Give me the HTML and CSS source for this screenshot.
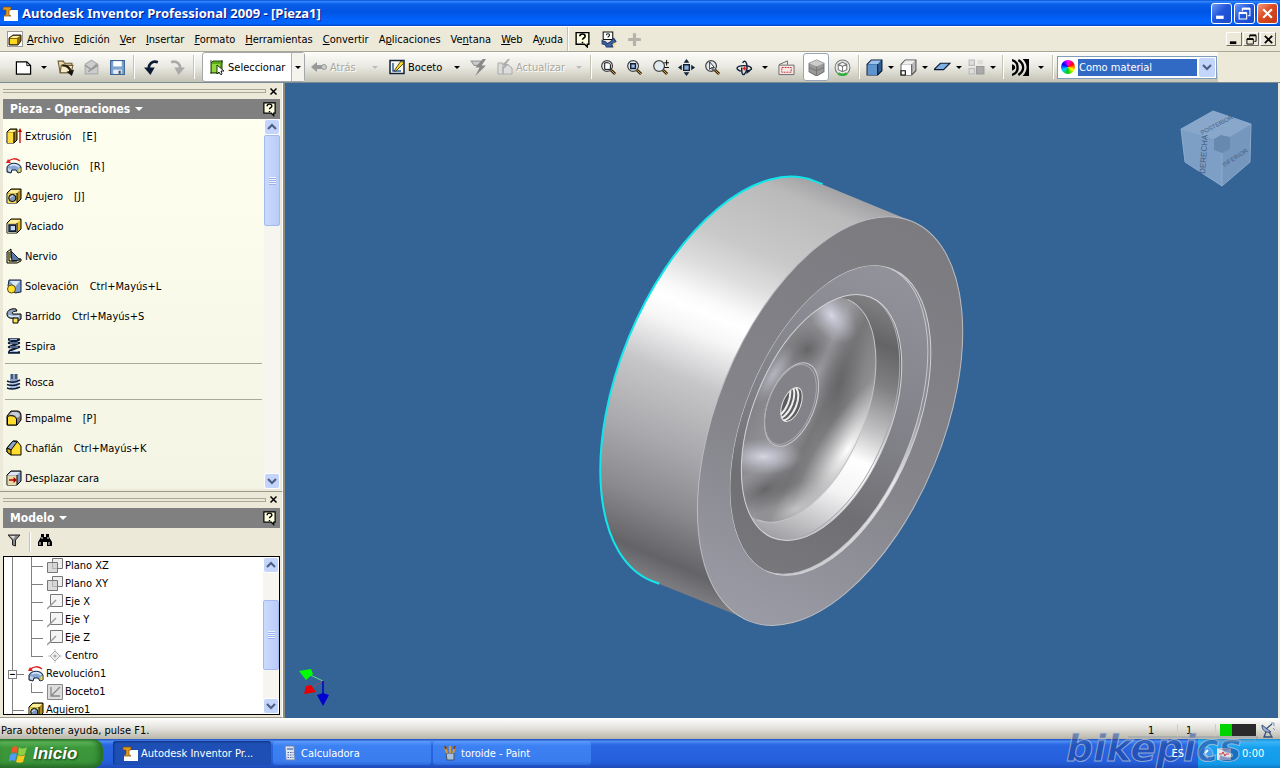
FILE: index.html
```html
<!DOCTYPE html>
<html lang="es">

<head>
    <meta charset="UTF-8">
    <title>Autodesk Inventor Professional 2009 - [Pieza1]</title>
    <link rel="stylesheet" href="styles.css">
</head>

<body>
    <!-- shared icons -->
    <svg class="defs" width="0" height="0">
        <symbol id="app" viewBox="0 0 16 16">
            <path d="M5 5h11v11H2v-6h3z" fill="#fff"/>
            <path d="M1 2h8v3H7v5l2 1H2l2-2V5H1z" fill="#e39a1c" stroke="#7a4a08" stroke-width=".7"/>
        </symbol>
        <symbol id="part" viewBox="0 0 16 16">
            <rect x=".5" y=".5" width="15" height="15" fill="#fff" stroke="#999"/>
            <path d="M2 7l4-3h8v6l-3 4H2z" fill="#8a6500" stroke="#222"/>
            <path d="M3 8h7v5H3z" fill="#ffd91e"/><path d="M3 7l3-2h7l-3 2z" fill="#fff09a"/>
        </symbol>
        <symbol id="help" viewBox="0 0 16 16">
            <path d="M2 1.500h12v11h-1.500v2.500L10 12.500H2z" fill="#ffffe1" stroke="#000" stroke-width="1.300"/>
            <path d="M5.500 5c0-3 5-3 5 0 0 1.600-2.500 1.600-2.500 3.300M8 10v1.500" fill="none" stroke="#000" stroke-width="1.500"/>
        </symbol>
        <symbol id="lens" viewBox="0 0 18 18">
            <path d="M11 11l5 5" stroke="#3b2412" stroke-width="3"/><path d="M12 12l4 4" stroke="#d8a33c" stroke-width="1"/>
            <circle cx="7.500" cy="7.500" r="5.700" fill="#dfe9ee" stroke="#444" stroke-width="1.300"/>
        </symbol>
        <symbol id="extr" viewBox="0 0 16 16">
            <path d="M1 4l3-3h7v11l-3 3H1z" fill="#9a7b12" stroke="#000"/><path d="M1.500 4.500h6V15h-6z" fill="#ffdc3c"/><path d="M2 4l2-2h6L8 4z" fill="#fff3a0"/><path d="M8 4v11" stroke="#000"/>
            <path d="M14 15V3" stroke="#c00000" stroke-width="1.300"/><path d="M14 0l2 4h-4z" fill="#c00000"/>
        </symbol>
        <symbol id="rev" viewBox="0 0 16 16">
            <path d="M1 9c2-5 12-5 14 0v5l-3 1-2-3H6l-1 3-4-1z" fill="#86a7d4" stroke="#10203a"/>
            <path d="M4 8c3-2 6-2 9 1" stroke="#d9e6f8" stroke-width="1.500" fill="none"/><path d="M12.500 11l2-1v4l-2 .5z" fill="#ffd91e"/><path d="M2 10l3 1v3l-3-1z" fill="#c2d3ea"/>
            <path d="M2 4C5 0 10 0 14 3" fill="none" stroke="#d22" stroke-width="1.500"/><path d="M0 5l2-4 3 4z" fill="#d22"/>
        </symbol>
        <symbol id="hole" viewBox="0 0 16 16">
            <path d="M1 5l4-4h10v10l-4 4H1z" fill="#b08e1c" stroke="#000"/><path d="M1.500 5.500H11V15H1.500z" fill="#f5d95a"/><path d="M2 5l3-3h9l-3 3z" fill="#fff0a0"/><path d="M11 5v10" stroke="#000"/>
            <circle cx="6.300" cy="10" r="3.600" fill="#7c95b8" stroke="#000"/><path d="M4 10a3 3 0 013-2" stroke="#e5eefb" fill="none"/>
        </symbol>
        <symbol id="shell" viewBox="0 0 16 16">
            <path d="M1 5l4-4h10v10l-4 4H1z" fill="#e4b920" stroke="#000"/><path d="M1.500 5.500H11V15H1.500z" fill="#e8e2b8"/><path d="M2 5l3-3h9l-3 3z" fill="#ffefa0"/><path d="M11 5v10" stroke="#000"/>
            <path d="M3 7h6.500v6.500H3z" fill="#4a6691" stroke="#0a1426" stroke-width="1.300"/><path d="M5 8h4v4H5z" fill="#c8d6ec"/>
        </symbol>
        <symbol id="rib" viewBox="0 0 16 16">
            <path d="M1 4l4-3v9l10 1v2l-4 2H1z" fill="#e8dfa0" stroke="#000"/><path d="M5 3l9 9-8 1z" fill="#5e7ca8" stroke="#0f1c36"/><path d="M3 4v9h8" fill="none" stroke="#000"/>
        </symbol>
        <symbol id="loft" viewBox="0 0 16 16">
            <path d="M3 2h12v12l-6 1L2 8z" fill="#7c9bc8" stroke="#10203a"/><path d="M4 3h10L9 9z" fill="#dce8f7"/><circle cx="5.500" cy="11" r="4" fill="#ffe02e" stroke="#5c4a00"/>
        </symbol>
        <symbol id="sweep" viewBox="0 0 16 16">
            <path d="M1 6c0-4 5-6 9-5l1 2C7 3 5 5 7 6h8v5l-3 2-4-3C3 11 1 9 1 6z" fill="#8ea4c2" stroke="#000"/><path d="M3 7c1 2 4 2 10 1" stroke="#dfe8f5" fill="none" stroke-width="1.500"/><path d="M7 10h5v5H7z" fill="#ffe25a" stroke="#000"/>
        </symbol>
        <symbol id="coil" viewBox="0 0 16 16">
            <path d="M2 1.500h11L3 5h10L3 9h10L3 13M2 14.500h12" fill="none" stroke="#0e1d3a" stroke-width="2.400" stroke-linejoin="round"/>
            <path d="M4 5h8M4 9h8M4 1.500h7M4 13.500h8" stroke="#9db6dc" fill="none"/>
        </symbol>
        <symbol id="thread" viewBox="0 0 16 16">
            <path d="M4 0h8v15H4z" fill="#8ca3c4"/><path d="M6 0v5M10 0v5" stroke="#22304a" stroke-width="1.300"/>
            <path d="M1 7c4 2 8 2 13-1M1 10.500c5 2 9 1 13-1M1 14c5 2 9 1 13-1" stroke="#0e1d3a" stroke-width="1.500" fill="none"/><path d="M3 9c3 1 6 1 10-1M3 12.500c4 1 6 1 10-1" stroke="#c3d4ee" fill="none"/>
        </symbol>
        <symbol id="fillet" viewBox="0 0 16 16">
            <path d="M1 15V6l4-5h6c3 0 4 2 4 5v4l-4 5z" fill="#86796a" stroke="#000"/><path d="M1.500 15V7C3 5 9 5 10.500 9v6z" fill="#ffdc2e" stroke="#000"/><path d="M3 5l3-3h4c2 0 3 1 4 4l-3 2C10 5 7 4 3 5z" fill="#c3d0e2"/>
        </symbol>
        <symbol id="chamfer" viewBox="0 0 16 16">
            <path d="M1 8l6-7h4l4 5v9H5l-4-3z" fill="#ffdc2e" stroke="#000"/><path d="M1 8l6-7 4 1-6 8z" fill="#8ca4c8" stroke="#000"/><path d="M1 8l4 2v5l-4-3z" fill="#d9ad14" stroke="#000"/>
        </symbol>
        <symbol id="move" viewBox="0 0 16 16">
            <path d="M1 5l4-4h10v10l-4 4H1z" fill="#7e99bd" stroke="#000"/><path d="M1.500 5.500H11V15H1.500z" fill="#e7d9a8"/><path d="M2 5l3-3h9l-3 3z" fill="#dce6f4"/><path d="M11 5v10" stroke="#000"/>
            <path d="M3 10h5" stroke="#b00000" stroke-width="1.500"/><path d="M7.500 7l3.500 3-3.500 3z" fill="#b00000"/>
        </symbol>
        <symbol id="plane" viewBox="0 0 16 16">
            <path d="M5.500.5h10v10h-10z" fill="#efefef" stroke="#777"/><path d="M.5 4.500h10v10H.5z" fill="#ccc" fill-opacity=".7" stroke="#777"/>
        </symbol>
        <symbol id="axis" viewBox="0 0 16 16">
            <path d="M3.500.5h12v12h-12z" fill="#f4f4f4" stroke="#777"/><path d="M0 15L9 6" stroke="#999" stroke-width="1.500"/>
        </symbol>
        <symbol id="center" viewBox="0 0 16 16">
            <path d="M8 1v14M1 8h14" stroke="#ccc"/><path d="M8 3l5 5-5 5-5-5z" fill="#eee" stroke="#aaa"/><circle cx="8" cy="8" r="1.500" fill="#aaa"/>
        </symbol>
        <symbol id="sketch" viewBox="0 0 16 16">
            <path d="M.5.5h15v15H.5z" fill="#ddd" stroke="#888"/><path d="M4 3v9h9M4 12l9-9" stroke="#888" fill="none" stroke-width="1.300"/>
        </symbol>
        <symbol id="chev-up" viewBox="0 0 10 8"><path d="M1 6l4-4 4 4" fill="none" stroke="#4d6185" stroke-width="2.200"/></symbol>
        <symbol id="chev-down" viewBox="0 0 10 8"><path d="M1 2l4 4 4-4" fill="none" stroke="#4d6185" stroke-width="2.200"/></symbol>
        <symbol id="restore" viewBox="0 0 12 12">
            <path d="M4 4V1.500h7V8H9" fill="none" stroke="currentColor"/><path d="M4 1.500h7" stroke="currentColor" stroke-width="2"/>
            <path d="M1 5.500h7V11H1z" fill="none" stroke="currentColor"/><path d="M1 5.500h7" stroke="currentColor" stroke-width="2"/>
        </symbol>
        <symbol id="cross" viewBox="0 0 12 12"><path d="M2 2l8 8M10 2l-8 8" stroke="currentColor" stroke-width="2"/></symbol>
        <symbol id="minim" viewBox="0 0 12 12"><path d="M1 9.500h7" stroke="currentColor" stroke-width="3"/></symbol>
    </svg>

    <header class="titlebar">
        <svg class="icon"><use href="#app"/></svg>
        <h1>Autodesk Inventor Professional 2009 - [Pieza1]</h1>
        <div class="win-buttons">
            <button aria-label="Minimizar"><svg><use href="#minim"/></svg></button>
            <button aria-label="Restaurar"><svg><use href="#restore"/></svg></button>
            <button class="close" aria-label="Cerrar"><svg><use href="#cross"/></svg></button>
        </div>
    </header>

    <nav class="menubar">
        <svg class="icon"><use href="#part"/></svg>
        <div class="menus">
            <button><u>A</u>rchivo</button>
            <button><u>E</u>dición</button>
            <button><u>V</u>er</button>
            <button><u>I</u>nsertar</button>
            <button><u>F</u>ormato</button>
            <button><u>H</u>erramientas</button>
            <button><u>C</u>onvertir</button>
            <button>A<u>p</u>licaciones</button>
            <button>Ve<u>n</u>tana</button>
            <button><u>W</u>eb</button>
            <button>A<u>y</u>uda</button>
        </div>
        <span class="sep"></span>
        <button class="tool" aria-label="Ayuda"><svg><use href="#help"/></svg></button>
        <button class="tool" aria-label="Novedades"><svg viewBox="0 0 16 16"><path d="M3 1h9v7H3z" fill="#fff" stroke="#111"/><path d="M6 4c0-2 3-2 3 0 0 1-1.500 1-1.500 2" fill="none" stroke="#111"/><path d="M2 9l3 1 2 2 3-2 3-3 2 3-4 2 1 3H6l-1-2-3-1z" fill="#3f62a0" stroke="#203a70"/><path d="M13 10l1 2 2 0-2 1 0 2-1-2z" fill="#ffd97a"/></svg></button>
        <button class="tool" aria-label="Añadir" disabled><svg viewBox="0 0 16 16"><path d="M8 2v12M2 8h12" stroke="#b5b3ac" stroke-width="3"/></svg></button>
        <div class="doc-buttons">
            <button aria-label="Minimizar documento"><svg><use href="#minim"/></svg></button>
            <button aria-label="Restaurar documento"><svg><use href="#restore"/></svg></button>
            <button aria-label="Cerrar documento"><svg><use href="#cross"/></svg></button>
        </div>
    </nav>

    <div class="toolbar">
        <div class="tools">
            <button class="tool" aria-label="Nuevo"><svg viewBox="0 0 18 16"><path d="M1.500 2h11l4 4v9h-15z" fill="#fff" stroke="#000" stroke-width="1.300"/><path d="M12.500 2v4h4" fill="none" stroke="#000"/></svg></button>
            <button class="drop" aria-label="Más"></button>
            <button class="tool" aria-label="Abrir"><svg viewBox="0 0 16 16"><path d="M1 2h5l1 2h7v9H3z" fill="#e8d9ae" stroke="#6b5a35"/><path d="M4 6h11l-2 7H3z" fill="#f6ecc8" stroke="#6b5a35"/><path d="M5 6c5 0 7 2 8 6" fill="none" stroke="#2a1d0c" stroke-width="2"/><path d="M16 10l-2 6-5-4z" fill="#111"/></svg></button>
            <button class="tool" aria-label="Enviar" disabled><svg viewBox="0 0 16 16"><path d="M2 5l6-4 6 4v9H2z" fill="#ccc" stroke="#aaa"/><path d="M2 6l6 4 6-4M5 12l8-7" fill="none" stroke="#999" stroke-width="1.500"/></svg></button>
            <button class="tool" aria-label="Guardar"><svg viewBox="0 0 16 16"><path d="M1.500 1.500h13v13h-13z" fill="#7ba3d0" stroke="#3d6392"/><path d="M4 2h8v5H4z" fill="#fff"/><path d="M4 10h8v4H4z" fill="#e8eef6"/><path d="M9 11h2v3H9z" fill="#456"/></svg></button>
            <span class="sep"></span>
            <button class="tool" aria-label="Deshacer"><svg viewBox="0 0 16 16"><path d="M14 3C9 1 4 5 6 11" fill="none" stroke="#0d1a33" stroke-width="2.500"/><path d="M1 8h10l-4 7z" fill="#0d1a33"/></svg></button>
            <button class="tool" aria-label="Rehacer" disabled><svg viewBox="0 0 16 16"><path d="M2 3c5-2 10 2 8 8" fill="none" stroke="#aaa" stroke-width="2.500"/><path d="M15 8H5l4 7z" fill="#aaa"/></svg></button>
            <span class="sep"></span>
            <div class="split">
                <button class="label-tool"><svg viewBox="0 0 16 16"><path d="M2 4l2-2h9v10l-2 2H2z" fill="#5ca81c" stroke="#1f4d05"/><path d="M3 5h8v8H3z" fill="#90d83c"/><path d="M2 1v3M13 1v3M2 13v2" stroke="#333"/><path d="M8 6v9l2-2 2 3 1-1-1-3h3z" fill="#fff" stroke="#000" stroke-width=".8"/></svg>Seleccionar</button>
                <button class="drop" aria-label="Más"></button>
            </div>
            <button class="label-tool back" disabled><svg viewBox="0 0 16 16"><path d="M0 8l6-5v3h5v4H6v3z" fill="#999"/><circle cx="13" cy="8" r="2.500" fill="#ccc" stroke="#999"/></svg>Atrás</button>
            <button class="drop" aria-label="Más" disabled></button>
            <button class="label-tool boceto"><svg viewBox="0 0 16 16"><path d="M1 1.500h14v13H1z" fill="#f8f8e8" stroke="#10203a" stroke-width="1.500"/><path d="M4 4v8h8" fill="none" stroke="#2f5da6" stroke-width="1.500"/><path d="M5 12l7-10 3 2-8 8z" fill="#ffd91e" stroke="#222" stroke-width=".8"/></svg>Boceto</button>
            <button class="drop" aria-label="Más"></button>
            <button class="tool" aria-label="Actualizar todo" disabled><svg viewBox="0 0 16 16"><path d="M1 2h9v4H4z" fill="#ccc" stroke="#999"/><path d="M12 0L5 8h4l-4 8L15 6h-4l4-6z" fill="#888"/></svg></button>
            <button class="label-tool update" disabled><svg viewBox="0 0 16 16"><path d="M1 4h5v11H1zM6 8l4-3 5 4v6H6z" fill="#ddd" stroke="#aaa"/><path d="M11 0L5 6h3l-4 6 8-7H9l4-5z" fill="#aaa"/></svg>Actualizar</button>
            <button class="drop" aria-label="Más" disabled></button>
            <span class="sep"></span>
            <button class="tool" aria-label="Zoom todo"><svg viewBox="0 0 18 18"><use href="#lens"/><path d="M5 4h4l2 2v5H5z" fill="#fff" stroke="#000"/></svg></button>
            <button class="tool" aria-label="Zoom ventana"><svg viewBox="0 0 18 18"><use href="#lens"/><path d="M5 5h5v5H5z" fill="#9cb9e0" stroke="#10203a" stroke-width="1.500"/></svg></button>
            <button class="tool" aria-label="Zoom"><svg viewBox="0 0 18 18"><use href="#lens"/><path d="M13 4h5M15.500 1v6M13 9h5" stroke="#000"/></svg></button>
            <button class="tool" aria-label="Encuadre"><svg viewBox="0 0 18 18"><path d="M9 0l3 4H6zM9 18l3-4H6zM0 9l4-3v6zM18 9l-4-3v6z" fill="#10203a"/><path d="M6 6h6v6H6z" fill="#8fb0dc" stroke="#10203a" stroke-width="1.500"/></svg></button>
            <button class="tool" aria-label="Zoom seleccionado"><svg viewBox="0 0 18 18"><use href="#lens"/><path d="M6 3v8l2-2 1 3 1-1-1-2h2z" fill="#fff" stroke="#000" stroke-width=".8"/></svg></button>
            <button class="tool orbit" aria-label="Órbita"><svg viewBox="0 0 18 18"><path d="M5 13c-6-2-5-6 3-6s12 4 4 6" fill="none" stroke="#10203a" stroke-width="1.500"/><path d="M7 4c4-6 7 6 2 12-3 2-3-3-3-7" fill="none" stroke="#10203a" stroke-width="1.500"/><path d="M9 8v4M7 10h4" stroke="#d22" stroke-width="1.500"/><path d="M11 11l4 2-4 3z" fill="#10203a"/></svg></button>
            <button class="drop" aria-label="Más"></button>
            <button class="tool" aria-label="Mirar a"><svg viewBox="0 0 18 16"><path d="M1 5l9-4v4" fill="none" stroke="#666"/><path d="M1 5.500h16v10H1z" fill="#f6e8e8" stroke="#666"/><path d="M4 8h10v5H4z" fill="none" stroke="#c22" stroke-dasharray="2 1"/></svg></button>
            <button class="tool active" aria-label="Sombreado"><svg viewBox="0 0 16 16"><path d="M8 1l7 3v8l-7 4-7-4V4z" fill="#999" stroke="#777"/><path d="M8 1l7 3-7 3-7-3z" fill="#ccc"/><path d="M1 8l7 3 7-3M8 7v8" fill="none" stroke="#777"/></svg></button>
            <button class="tool" aria-label="Proyección"><svg viewBox="0 0 16 16"><circle cx="8" cy="8" r="7" fill="#e8eeea" stroke="#777"/><path d="M4 13.500a7 7 0 008 0" fill="none" stroke="#2fae3c" stroke-width="2.500"/><path d="M8 3l4 2v5l-4 2-4-2V5zM4 5l4 2 4-2M8 7v5" fill="#fff" stroke="#777"/></svg></button>
            <span class="sep"></span>
            <button class="tool small" aria-label="Color"><svg viewBox="0 0 16 16"><path d="M1 5l4-4h10v10l-4 4H1z" fill="#2e5c94" stroke="#0b1a30"/><path d="M1.500 5.500H11V15H1.500z" fill="#5f94cf"/><path d="M2 5l3-3.500h9L11 5z" fill="#9cc2ec"/><path d="M11 5v10" stroke="#0b1a30"/></svg></button>
            <button class="drop small" aria-label="Más"></button>
            <button class="tool small" aria-label="Sombra"><svg viewBox="0 0 16 16"><path d="M1 5l4-4h10v10l-4 4H1z" fill="#bbb" stroke="#555"/><path d="M1.500 5.500H11V15H1.500z" fill="#fff"/><path d="M2 5l3-3.500h9L11 5z" fill="#eee"/><path d="M11 5v10" stroke="#555"/><path d="M1 11h4v4H1z" fill="#fff" stroke="#000"/></svg></button>
            <button class="drop small" aria-label="Más"></button>
            <button class="tool small" aria-label="Plano"><svg viewBox="0 0 16 16"><path d="M0 10l6-6h9l-6 6z" fill="#7fb0e4" stroke="#0b1a30"/></svg></button>
            <button class="drop small" aria-label="Más"></button>
            <button class="tool small" aria-label="Sistema" disabled><svg viewBox="0 0 16 16"><path d="M1 1h5v5H1zM1 9h5v5H1z" fill="#ddd" stroke="#bbb"/><path d="M8 7h7v7H8z" fill="#aaa" stroke="#999"/><path d="M9 1h5v4H9z" fill="#ddd"/></svg></button>
            <button class="drop small" aria-label="Más"></button>
            <span class="sep"></span>
            <button class="tool" aria-label="Ondas"><svg viewBox="0 0 16 16"><path d="M0 1c7 2 7 12 0 14M6 1c6 4 6 10 0 14" fill="none" stroke="#000" stroke-width="2.200"/><path d="M10 0h6v16h-6c5-5 5-11 0-16z"/><path d="M0 5c4 1 4 5 0 6z"/></svg></button>
            <button class="drop" aria-label="Más"></button>
            <span class="sep"></span>
            <div class="combo">
                <span class="wheel"></span>
                <select aria-label="Estilo de color">
                    <option selected>Como material</option>
                </select>
                <span class="combo-arrow"><svg><use href="#chev-down"/></svg></span>
            </div>
        </div>
    </div>

    <main>
        <aside>
            <section class="panel operations">
                <div class="grip"><i></i><button aria-label="Cerrar panel"><svg><use href="#cross"/></svg></button></div>
                <div class="panel-title">
                    <button>Pieza - Operaciones</button>
                    <svg><use href="#help"/></svg>
                </div>
                <div class="scroll-area">
                    <ul class="ops">
                        <li><svg><use href="#extr"/></svg>Extrusión<kbd>[E]</kbd></li>
                        <li><svg><use href="#rev"/></svg>Revolución<kbd>[R]</kbd></li>
                        <li><svg><use href="#hole"/></svg>Agujero<kbd>[J]</kbd></li>
                        <li><svg><use href="#shell"/></svg>Vaciado</li>
                        <li><svg><use href="#rib"/></svg>Nervio</li>
                        <li><svg><use href="#loft"/></svg>Solevación<kbd>Ctrl+Mayús+L</kbd></li>
                        <li><svg><use href="#sweep"/></svg>Barrido<kbd>Ctrl+Mayús+S</kbd></li>
                        <li><svg><use href="#coil"/></svg>Espira</li>
                        <li class="line"></li>
                        <li><svg><use href="#thread"/></svg>Rosca</li>
                        <li class="line"></li>
                        <li><svg><use href="#fillet"/></svg>Empalme<kbd>[P]</kbd></li>
                        <li><svg><use href="#chamfer"/></svg>Chaflán<kbd>Ctrl+Mayús+K</kbd></li>
                        <li><svg><use href="#move"/></svg>Desplazar cara</li>
                    </ul>
                    <div class="scrollbar">
                        <button aria-label="Subir"><svg><use href="#chev-up"/></svg></button>
                        <div class="track"><div class="thumb"></div></div>
                        <button aria-label="Bajar"><svg><use href="#chev-down"/></svg></button>
                    </div>
                </div>
            </section>

            <section class="panel model">
                <div class="grip"><i></i><button aria-label="Cerrar panel"><svg><use href="#cross"/></svg></button></div>
                <div class="panel-title">
                    <button>Modelo</button>
                    <svg><use href="#help"/></svg>
                </div>
                <div class="model-tools">
                    <button class="tool small" aria-label="Filtro"><svg viewBox="0 0 16 16"><path d="M2 3h12L9.500 8v6l-3-1V8z" fill="#888" stroke="#222"/><path d="M4 4h5L7.500 7z" fill="#ddd"/></svg></button>
                    <span class="sep"></span>
                    <button class="tool small" aria-label="Buscar"><svg viewBox="0 0 16 16"><path d="M4 2h3v3h2V2h3v3l3 5v4h-5v-4H6v4H1v-4l3-5z" fill="#000"/><path d="M3 10v3M12 10v3M5 5v2M11 5v2" stroke="#fff"/></svg></button>
                </div>
                <div class="scroll-area tree-box">
                    <ul class="tree">
                        <li><i class="v"></i><i class="tee"></i><svg><use href="#plane"/></svg>Plano XZ</li>
                        <li><i class="v"></i><i class="tee"></i><svg><use href="#plane"/></svg>Plano XY</li>
                        <li><i class="v"></i><i class="tee"></i><svg><use href="#axis"/></svg>Eje X</li>
                        <li><i class="v"></i><i class="tee"></i><svg><use href="#axis"/></svg>Eje Y</li>
                        <li><i class="v"></i><i class="tee"></i><svg><use href="#axis"/></svg>Eje Z</li>
                        <li><i class="v"></i><i class="tee end"></i><svg><use href="#center"/></svg>Centro</li>
                        <li><i class="v tee"><b>−</b></i><svg><use href="#rev"/></svg>Revolución1</li>
                        <li><i class="v"></i><i class="tee end"></i><svg><use href="#sketch"/></svg>Boceto1</li>
                        <li><i class="v tee"></i><svg><use href="#hole"/></svg>Agujero1</li>
                    </ul>
                    <div class="scrollbar">
                        <button aria-label="Subir"><svg><use href="#chev-up"/></svg></button>
                        <div class="track middle"><div class="thumb"></div></div>
                        <button aria-label="Bajar"><svg><use href="#chev-down"/></svg></button>
                    </div>
                </div>
            </section>
        </aside>

        <div class="viewport">
            <svg class="scene" viewBox="284 84 996 634" preserveAspectRatio="xMidYMid slice">
                <defs>
                    <linearGradient id="side" gradientUnits="userSpaceOnUse" x1="892" y1="215" x2="729" y2="610">
                        <stop offset="0" stop-color="#a4a4a6"/>
                        <stop offset=".05" stop-color="#bababb"/>
                        <stop offset=".2" stop-color="#c9c9ca"/>
                        <stop offset=".28" stop-color="#dededf"/>
                        <stop offset=".35" stop-color="#fafafa"/>
                        <stop offset=".38" stop-color="#fff"/>
                        <stop offset=".43" stop-color="#f6f6f7"/>
                        <stop offset=".54" stop-color="#c6c6c8"/>
                        <stop offset=".7" stop-color="#a8a8ac"/>
                        <stop offset=".83" stop-color="#8b8b8f"/>
                        <stop offset=".95" stop-color="#646468"/>
                        <stop offset="1" stop-color="#7b7b7f"/>
                    </linearGradient>
                    <linearGradient id="face" gradientUnits="userSpaceOnUse" x1="900" y1="230" x2="745" y2="610">
                        <stop offset="0" stop-color="#7c7b80"/>
                        <stop offset=".6" stop-color="#85858b"/>
                        <stop offset="1" stop-color="#9a9aa5"/>
                    </linearGradient>
                    <linearGradient id="step" gradientUnits="userSpaceOnUse" x1="893" y1="270" x2="769" y2="572">
                        <stop offset="0" stop-color="#8e8e94"/>
                        <stop offset=".35" stop-color="#88888e"/>
                        <stop offset=".6" stop-color="#e8e8ea"/>
                        <stop offset="1" stop-color="#c8c8cb"/>
                    </linearGradient>
                    <linearGradient id="recess" gradientUnits="userSpaceOnUse" x1="890" y1="269" x2="766" y2="571">
                        <stop offset="0" stop-color="#92929b"/>
                        <stop offset=".5" stop-color="#808087"/>
                        <stop offset=".75" stop-color="#707074"/>
                        <stop offset="1" stop-color="#78787c"/>
                    </linearGradient>
                    <linearGradient id="wall" gradientUnits="userSpaceOnUse" x1="871" y1="298" x2="773" y2="538">
                        <stop offset="0" stop-color="#808083"/>
                        <stop offset=".15" stop-color="#646467"/>
                        <stop offset=".3" stop-color="#808083"/>
                        <stop offset=".48" stop-color="#c4c4c6"/>
                        <stop offset=".6" stop-color="#fff"/>
                        <stop offset=".74" stop-color="#f4f4f5"/>
                        <stop offset="1" stop-color="#a0a0a4"/>
                    </linearGradient>
                    <linearGradient id="bowl" gradientUnits="userSpaceOnUse" x1="745" y1="380" x2="870" y2="440">
                        <stop offset="0" stop-color="#78787c"/>
                        <stop offset=".2" stop-color="#88888c"/>
                        <stop offset=".45" stop-color="#9a9a9e"/>
                        <stop offset=".6" stop-color="#77777a"/>
                        <stop offset=".8" stop-color="#8c8c8f"/>
                        <stop offset="1" stop-color="#b4b4b7"/>
                    </linearGradient>
                    <radialGradient id="lavender">
                        <stop offset="0" stop-color="#d6d6e4"/>
                        <stop offset=".4" stop-color="#c0c0cd" stop-opacity=".75"/>
                        <stop offset="1" stop-color="#a8a8b2" stop-opacity="0"/>
                    </radialGradient>
                    <radialGradient id="white">
                        <stop offset="0" stop-color="#fff"/>
                        <stop offset="1" stop-color="#ccc" stop-opacity="0"/>
                    </radialGradient>
                    <radialGradient id="dark">
                        <stop offset="0" stop-color="#656568"/>
                        <stop offset="1" stop-color="#707073" stop-opacity="0"/>
                    </radialGradient>
                    <clipPath id="ring-clip"><path d="M893 270A85 163 22.200 0 1 769 572A85 163 22.200 0 1 893 270z"/></clipPath>
                    <clipPath id="bowl-clip"><path d="M871 298A68 129 22.200 0 1 773 538A68 129 22.200 0 1 871 298z"/></clipPath>
                    <clipPath id="floor-clip"><path d="M848 300A62 118 22.200 0 1 758 520A62 118 22.200 0 1 848 300z"/></clipPath>
                    <clipPath id="hole-clip"><ellipse rx="9" ry="18" transform="translate(792 405) rotate(22.2)"/></clipPath>
                </defs>

                <!-- tyre side -->
                <path d="M815 182A112 214 22.200 0 0 652 581L749 620L912 222z" fill="url(#side)"/>
                <path d="M823 185L815 182A112 214 22.200 0 0 652 581L660 584" fill="none" stroke="#12e6ea" stroke-width="2"/>
                <!-- front face -->
                <path d="M912 222A112 214 22.200 0 1 749 621A112 214 22.200 0 1 912 222z" fill="url(#face)" stroke="#bcbcc2"/>
                <path d="M893 270A85 163 22.200 0 1 769 572A85 163 22.200 0 1 893 270z" fill="url(#step)" stroke="#d0d0d4"/>
                <g clip-path="url(#ring-clip)">
                    <path d="M890 269A85 163 22.200 0 1 766 571A85 163 22.200 0 1 890 269z" fill="url(#recess)" stroke="#c6c6cc"/>
                </g>
                <!-- bowl -->
                <path d="M871 298A68 129 22.200 0 1 773 538A68 129 22.200 0 1 871 298z" fill="url(#wall)"/>
                <g clip-path="url(#bowl-clip)">
                    <path d="M848 300A62 118 22.200 0 1 758 520A62 118 22.200 0 1 848 300z" fill="url(#bowl)"/>
                    <g clip-path="url(#floor-clip)">
                        <ellipse cx="840" cy="385" rx="22" ry="70" fill="url(#dark)" transform="rotate(14 840 385)"/>
                        <ellipse cx="848" cy="450" rx="28" ry="90" fill="url(#white)" transform="rotate(33 848 450)"/>
                        <ellipse cx="795" cy="510" rx="50" ry="24" fill="url(#white)" opacity=".5" transform="rotate(-25 795 510)"/>
                        <ellipse cx="808" cy="350" rx="30" ry="24" fill="url(#dark)" transform="rotate(-40 808 350)"/>
                        <ellipse cx="765" cy="490" rx="44" ry="20" fill="url(#dark)" transform="rotate(-30 765 490)"/>
                        <ellipse cx="774" cy="375" rx="12" ry="34" fill="url(#lavender)" opacity=".6" transform="rotate(32 774 375)"/>
                        <ellipse cx="832" cy="316" rx="20" ry="32" fill="url(#lavender)" transform="rotate(-38 832 316)"/>
                        <ellipse cx="764" cy="457" rx="40" ry="18" fill="url(#lavender)"/>
                    </g>
                    <path d="M848 300A62 118 22.200 0 1 758 520" fill="none" stroke="#c4c4c8"/>
                    <path d="M869 297A68 129 22.200 0 1 771 537A68 129 22.200 0 1 869 297z" fill="none" stroke="#a9a9ae"/>
                </g>
                <path d="M871 298A68 129 22.200 0 1 773 538A68 129 22.200 0 1 871 298z" fill="none" stroke="#d2d2d7"/>
                <!-- hub -->
                <ellipse rx="23" ry="44" transform="translate(792 405) rotate(22.2)" fill="#828288" stroke="#c9c9ce"/>
                <ellipse rx="22" ry="42" transform="translate(791 405) rotate(22.2)" fill="none" stroke="#a8a8ad"/>
                <ellipse rx="9" ry="18" transform="translate(792 405) rotate(22.2)" fill="#5c5c5f" stroke="#ddd"/>
                <g clip-path="url(#hole-clip)" fill="none" stroke="#eee" stroke-width="2">
                    <ellipse rx="9" ry="18" transform="translate(788 404) rotate(22.2)"/>
                    <ellipse rx="9" ry="18" transform="translate(784 402) rotate(22.2)"/>
                    <ellipse rx="9" ry="18" transform="translate(780 401) rotate(22.2)"/>
                </g>
            </svg>

            <svg class="viewcube" viewBox="0 0 72 78">
                <path d="M33 1l38 13-29 17L1 19z" fill="#88a7cb"/>
                <path d="M1 19l41 12v45L5 52z" fill="#7e9fc5"/>
                <path d="M42 31l29-17-1 38-28 24z" fill="#7597be"/>
                <path d="M33 1l38 13-29 17L1 19zM42 31v45M1 19l4 33 37 24 28-24 1-38" fill="none" stroke="#8cabcd"/>
                <path d="M34 29l7-4 9 2v12l-8 4-8-3z" fill="#6789b0"/>
                <g fill="#435c80" font-family="Liberation Sans, sans-serif" font-size="8">
                    <text x="25" y="64" transform="rotate(-86 25 64)">DERECHA</text>
                    <text x="22" y="25" transform="rotate(-28 22 25)" font-size="6">POSTERIOR</text>
                    <text x="44" y="57" transform="rotate(-32 44 57)" font-size="6">INFERIOR</text>
                </g>
            </svg>

            <svg class="triad" viewBox="0 0 32 40">
                <path d="M24 14L9 7" stroke="#5ddf8a"/><path d="M24 14L14 20" stroke="#a04a5c"/><path d="M24 14v16" stroke="#00c" stroke-width="1.500"/>
                <path d="M0 4l12-2 2 5-7 6z" fill="#0f0"/><path d="M5 27l2-8 5-1 5 7z" fill="#e80000"/><path d="M18 28l6-2 6 2-6 11z" fill="#0000d0"/>
            </svg>
        </div>
    </main>

    <footer class="statusbar">
        <p>Para obtener ayuda, pulse F1.</p>
        <span class="cell">1</span>
        <span class="cell">1</span>
        <span class="meter"></span>
        <svg class="icon" viewBox="0 0 16 16"><path d="M2 3c0 6 4 8 9 7z" fill="#9fb6d8" stroke="#33507e"/><path d="M6 7l6-5M6 10l-2 5h8l-3-5" fill="none" stroke="#33507e" stroke-width="1.300"/><path d="M11 1h3v3M13 6l2 2" fill="none" stroke="#7792bb"/></svg>
    </footer>

    <div class="taskbar">
        <button class="start">
            <svg viewBox="0 0 20 18"><path d="M3 3c2-2 4-2 6-1L8 8C6 7 4 7 2 9z" fill="#f0582a"/><path d="M10 2c2 2 5 2 8 0l-2 7c-2 2-5 2-7 0z" fill="#8fd044"/><path d="M1 10c2-2 5-2 7-1l-2 7c-2-1-4-1-6 1z" fill="#4f9bf5"/><path d="M9 10c2 1 4 2 7 0l-2 7c-2 1-5 1-7 0z" fill="#fcc81e"/></svg>
            Inicio
        </button>
        <button class="task current"><svg><use href="#app"/></svg>Autodesk Inventor Pr...</button>
        <button class="task"><svg viewBox="0 0 16 16"><path d="M3 1h9l1 14H4z" fill="#dfe7f5" stroke="#6d83b0"/><path d="M5 3h6v2H5z" fill="#7c98c8"/><path d="M5.500 7.500h6M5.500 10h6M5.500 12.500h6" stroke="#4b66a0" stroke-dasharray="1.500 1"/></svg>Calculadora</button>
        <button class="task"><svg viewBox="0 0 16 16"><path d="M4 8h8v7H5z" fill="#a9c2d8" stroke="#456"/><path d="M5 8L3 2M8 8V1M11 8l2-6" stroke="#d99a32" stroke-width="2.200"/><path d="M3 1l1 3M13 1l-1 3" stroke="#8a3b12" stroke-width="2"/></svg>toroide - Paint</button>
        <span class="lang">ES</span>
        <div class="tray">
            <button aria-label="Mostrar iconos"><svg viewBox="0 0 16 16"><circle cx="8" cy="8" r="7" fill="#3d9cf0" stroke="#8cc4f5"/><path d="M10 4L6 8l4 4" fill="none" stroke="#fff" stroke-width="2"/></svg></button>
            <svg viewBox="0 0 16 16"><path d="M1 2h14v12H1z" fill="#e6e6ee"/><path d="M3 8h3l1-2 2 4 1-2h3" stroke="#c33" fill="none"/><path d="M1 2l7 2 7-2" stroke="#aab" fill="none"/></svg>
            <time>0:00</time>
        </div>
        <div class="watermark">
            <svg viewBox="0 0 194 36"><path d="M62 5h130l-4 4H150" fill="none" stroke="#8d96aa" stroke-opacity=".8"/></svg>
            <span>bikepics</span>
        </div>
    </div>
</body>

</html>
```
FILE: styles.css
```css
html,
body {
    height: 100%;
    margin: 0;
    padding: 0;
}

body {
    display: flex;
    flex-direction: column;
    overflow: hidden;
    background: #ece9d8;
    color: #000;
    font: 11px "DejaVu Sans Condensed", "Noto Sans", sans-serif;
}

button {
    padding: 0;
    border: 0;
    background: none;
    color: inherit;
    font: inherit;
    white-space: nowrap;
}

ul {
    margin: 0;
    padding: 0;
    list-style: none;
}

svg {
    display: block;
    flex: none;
}

.defs {
    position: absolute;
}

.icon {
    width: 16px;
    height: 16px;
}

/* title bar */
.titlebar {
    display: flex;
    align-items: center;
    flex: none;
    height: 26px;
    padding: 0 2px;
    background: linear-gradient(#0a4fd0, #2e86ff 6%, #0a5ee8 16%, #0054e3 45%, #0264ff 80%, #0264ff 92%, #0040b8);
    color: #fff;
}

.titlebar h1 {
    flex: 1;
    margin: 0 0 0 4px;
    font: bold 13px "Noto Sans", "Open Sans", sans-serif;
    text-shadow: 1px 1px 0 #0a1883;
}

.win-buttons {
    display: flex;
    gap: 2px;
}

.win-buttons button {
    display: grid;
    place-items: center;
    width: 21px;
    height: 21px;
    border: 1px solid #fff;
    border-radius: 3px;
    background: linear-gradient(135deg, #6f9bf5, #2257dc 45%, #1a48c8);
    color: #fff;
}

.win-buttons .close {
    background: linear-gradient(135deg, #f09a7c, #dc4a20 45%, #c03a14);
}

.win-buttons svg {
    width: 13px;
    height: 13px;
}

/* menu bar */
.menubar {
    display: flex;
    align-items: center;
    flex: none;
    height: 24px;
    padding: 0 4px 0 7px;
    border-top: 1px solid #fff;
}

.menus {
    display: flex;
    gap: 10px;
    margin: 0 4px;
}

.menubar .doc-buttons {
    display: flex;
    gap: 1px;
    margin-left: auto;
}

.doc-buttons button {
    width: 16px;
    height: 14px;
    border: 1px solid;
    border-color: #fff #716f64 #716f64 #fff;
}

.doc-buttons svg {
    width: 11px;
    height: 11px;
    margin: auto;
}

.sep {
    flex: none;
    width: 1px;
    height: 24px;
    margin: 0 3px;
    border-right: 1px solid #fff;
    background: #c5c2b4;
}

.menubar .sep {
    margin: 0;
}

.tool {
    display: grid;
    place-items: center;
    flex: none;
    width: 26px;
    height: 28px;
}

.tool svg {
    width: 17px;
    height: 17px;
}

.tool.small {
    width: 22px;
}

.tool.active {
    box-sizing: border-box;
    margin-left: 4px;
    border: 1px solid #98a5b5;
    border-radius: 3px;
    background: #fff;
}

.tool.orbit {
    margin-left: 6px;
}

/* toolbar */
.toolbar {
    flex: none;
    height: 30px;
    border-top: 1px solid #a9a797;
    border-bottom: 1px solid #7b8b94;
}

.tools {
    display: flex;
    align-items: center;
    box-sizing: border-box;
    width: 1218px;
    height: 30px;
    padding-left: 10px;
    background: linear-gradient(#fdfdfb, #e9e8e1 50%, #c4c2b4);
}

.drop {
    display: grid;
    place-items: center;
    flex: none;
    width: 16px;
    height: 28px;
}

.drop::before {
    content: "";
    border: 3px solid transparent;
    border-top-color: #000;
    border-bottom: 0;
}

.drop.small {
    width: 12px;
}

.drop:disabled::before {
    border-top-color: #bbb;
}

.label-tool {
    display: flex;
    align-items: center;
    gap: 3px;
    box-sizing: border-box;
    height: 28px;
    padding-left: 6px;
}

.label-tool svg {
    width: 16px;
    height: 16px;
}

.label-tool:disabled {
    color: #aaa89c;
    text-shadow: 1px 1px 0 #fff;
}

.split {
    display: flex;
    box-sizing: border-box;
    width: 103px;
    margin-left: 4px;
    border: 1px solid #a5a8a8;
    border-radius: 3px;
    background: #fff;
}

.split .label-tool {
    flex: 1;
    border-right: 1px solid #b5b5b0;
}

.split .drop {
    width: 12px;
    background: #f4f3ee;
}

.back {
    width: 62px;
}

.boceto {
    width: 66px;
}

.update {
    width: 80px;
}

.combo {
    display: flex;
    align-items: center;
    box-sizing: border-box;
    width: 160px;
    height: 23px;
    padding: 0 1px 0 3px;
    border: 1px solid #7f9db9;
    background: #fff;
}

.wheel {
    width: 14px;
    height: 14px;
    margin-right: 3px;
    border-radius: 50%;
    background: conic-gradient(#f0f, #f00, #ff0, #0c0, #0cf, #00f, #f0f);
}

.combo select {
    flex: 1;
    height: 17px;
    padding: 0 1px;
    border: 0;
    border-radius: 0;
    appearance: none;
    background: #316ac5;
    color: #fff;
    font: inherit;
}

.combo-arrow {
    display: grid;
    place-items: center;
    width: 16px;
    height: 19px;
    margin-left: 2px;
    border-radius: 2px;
    background: #c4d5fb;
}

.combo-arrow svg,
.scrollbar svg {
    width: 10px;
    height: 8px;
}

/* main area */
main {
    display: flex;
    flex: 1;
    min-height: 0;
}

aside {
    display: flex;
    flex-direction: column;
    box-sizing: border-box;
    width: 285px;
    border-right: 2px solid #8e8b7d;
}

.panel {
    display: flex;
    flex-direction: column;
    min-height: 0;
    padding: 0 2px 2px 3px;
    border-bottom: 1px solid #9d9a8c;
    border-right: 1px solid #fff;
}

.operations {
    flex: 405 1 0;
}

.model {
    flex: 223 1 0;
}

.grip {
    display: flex;
    align-items: center;
    flex: none;
    height: 16px;
}

.grip i {
    flex: 1;
    height: 2px;
    margin-right: 3px;
    border: 1px solid #aca899;
    border-left: 0;
}

.grip button {
    width: 11px;
}

.grip svg {
    width: 9px;
    height: 9px;
}

.panel-title {
    display: flex;
    align-items: center;
    justify-content: space-between;
    flex: none;
    height: 20px;
    padding: 0 3px 0 7px;
    background: #808080;
    color: #fff;
    font-size: 12px;
    font-weight: bold;
}

.panel-title button {
    display: flex;
    align-items: center;
    gap: 5px;
}

.panel-title button::after {
    content: "";
    border: 4px solid transparent;
    border-top-color: #fff;
    border-bottom: 0;
}

.panel-title svg {
    width: 15px;
    height: 16px;
}

.scroll-area {
    display: flex;
    flex: 1;
    min-height: 0;
    overflow: hidden;
}

.ops {
    flex: 1;
    padding-top: 2px;
    background: linear-gradient(#fffff0, #f4f4e4);
}

.ops li {
    display: flex;
    align-items: center;
    height: 30px;
    padding-left: 3px;
}

.ops li.line {
    height: 1px;
    margin: 2px 2px 3px;
    padding: 0;
    background: #aca899;
}

.ops svg {
    width: 16px;
    height: 16px;
    margin-right: 3px;
}

.ops kbd {
    margin-left: 11px;
    font: inherit;
}

.scrollbar {
    display: flex;
    flex-direction: column;
    width: 16px;
    background: #f6f5f0;
}

.scrollbar button {
    display: grid;
    place-items: center;
    flex: none;
    height: 16px;
    border: 1px solid #fff;
    border-radius: 3px;
    background: #c4d4fb;
}

.track {
    display: flex;
    flex-direction: column;
    flex: 1;
}

.thumb {
    box-sizing: border-box;
    height: 27%;
    border: 1px solid #a3baf0;
    border-radius: 2px;
    background: repeating-linear-gradient(#eef4fe 0 1px, #9bb2ee 1px 2px) center / 7px 8px no-repeat, linear-gradient(90deg, #cbdafd, #bacbf8);
}

.track.middle {
    justify-content: center;
}

.middle .thumb {
    height: 56%;
}

.model-tools {
    display: flex;
    align-items: center;
    flex: none;
    height: 28px;
}

.model-tools .tool {
    height: 24px;
    margin-bottom: 3px;
}

.model-tools .sep {
    height: 20px;
    margin: 0 3px 0 4px;
}

.model-tools svg {
    width: 16px;
    height: 16px;
}

.tree-box {
    border: 1px solid #000;
    background: #fff;
}

.tree {
    flex: 1;
}

.tree li {
    display: flex;
    align-items: center;
    height: 18px;
}

.tree svg {
    width: 16px;
    height: 16px;
    margin-right: 2px;
}

/* connector lines: a vertical rule, with a stub for the branch */
.tree i {
    position: relative;
    box-sizing: border-box;
    width: 19px;
    height: 18px;
    background: linear-gradient(#808080, #808080) 8px 0 / 1px 18px no-repeat;
    font-style: normal;
}

.tree i.tee {
    width: 24px;
    background: linear-gradient(#808080, #808080) 8px 0 / 1px 18px no-repeat, linear-gradient(#808080, #808080) 8px 9px / 12px 1px no-repeat;
}

.tree i.end {
    background-size: 1px 9px, 12px 1px;
}

.tree b {
    position: absolute;
    left: 4px;
    top: 5px;
    box-sizing: border-box;
    width: 9px;
    height: 9px;
    border: 1px solid #808080;
    background: #fff;
    font-size: 9px;
    line-height: 7px;
    text-align: center;
}

/* 3D view */
.viewport {
    position: relative;
    flex: 1;
    min-width: 0;
    border-right: 2px solid #ece9d8;
    background: #346495;
}

.scene {
    width: 100%;
    height: 100%;
}

.viewcube {
    position: absolute;
    top: 27px;
    right: 26px;
    width: 72px;
    height: 78px;
}

.triad {
    position: absolute;
    left: 14px;
    bottom: 11px;
    width: 32px;
    height: 40px;
}

/* status bar */
.statusbar {
    display: flex;
    align-items: center;
    box-sizing: border-box;
    flex: none;
    height: 21px;
    padding: 3px 4px 0 1px;
    background: linear-gradient(#fff, #e2e1db 50%, #b8b6aa);
}

.statusbar p {
    flex: 1;
    margin: 0;
}

.cell {
    box-sizing: border-box;
    width: 38px;
    padding-left: 8px;
    border-right: 1px solid #cfcdc2;
}

.meter {
    width: 36px;
    height: 12px;
    margin: 0 4px 0 4px;
    background: linear-gradient(90deg, #00d400 12px, #2a2a2a 12px);
}

/* taskbar */
.taskbar {
    position: relative;
    display: flex;
    flex: none;
    height: 29px;
    background: linear-gradient(#1f4fc0, #4a8cf5 8%, #2a66e2 20%, #245edb 80%, #1d4ab8);
    color: #fff;
}

.start {
    display: flex;
    align-items: center;
    gap: 4px;
    width: 103px;
    margin-right: 9px;
    padding-left: 9px;
    border-radius: 0 10px 10px 0;
    background: linear-gradient(#2f7d2f, #5eb95c 10%, #3c983b 30%, #3a943a 80%, #2a6f2a);
    box-shadow: inset -4px 0 6px #256b25;
    font: italic bold 17px "Liberation Sans", sans-serif;
    text-shadow: 1px 1px 2px #153d15;
}

.start svg {
    width: 20px;
    height: 18px;
}

.task {
    display: flex;
    align-items: center;
    gap: 3px;
    box-sizing: border-box;
    width: 158px;
    margin: 2px 1px 3px;
    padding-left: 9px;
    border-radius: 3px;
    background: linear-gradient(#5c9afc, #3c81f3 20%, #3a7cee 85%, #2c68d8);
}

.task.current {
    background: #1e4fb4;
    box-shadow: inset 1px 1px 2px #12337c;
}

.task svg {
    width: 16px;
    height: 16px;
}

.lang {
    position: relative;
    z-index: 1;
    margin-left: auto;
    padding-right: 14px;
    line-height: 29px;
}

.tray {
    display: flex;
    align-items: center;
    gap: 2px;
    width: 82px;
    background: linear-gradient(#1690d8, #3ab4f8 10%, #16a0ee 30%, #129bea 85%, #0f7cc8);
}

.tray svg {
    width: 16px;
    height: 16px;
}

.tray time {
    margin-left: 8px;
}

.watermark {
    position: absolute;
    right: 20px;
    bottom: 0;
    width: 194px;
    height: 36px;
    color: rgba(28, 66, 150, .5);
    font: italic bold 38px/32px "DejaVu Sans", sans-serif;
    -webkit-text-stroke: 1px rgba(190, 200, 215, .7);
    pointer-events: none;
}

.watermark svg {
    position: absolute;
    width: 194px;
    height: 36px;
}
```
